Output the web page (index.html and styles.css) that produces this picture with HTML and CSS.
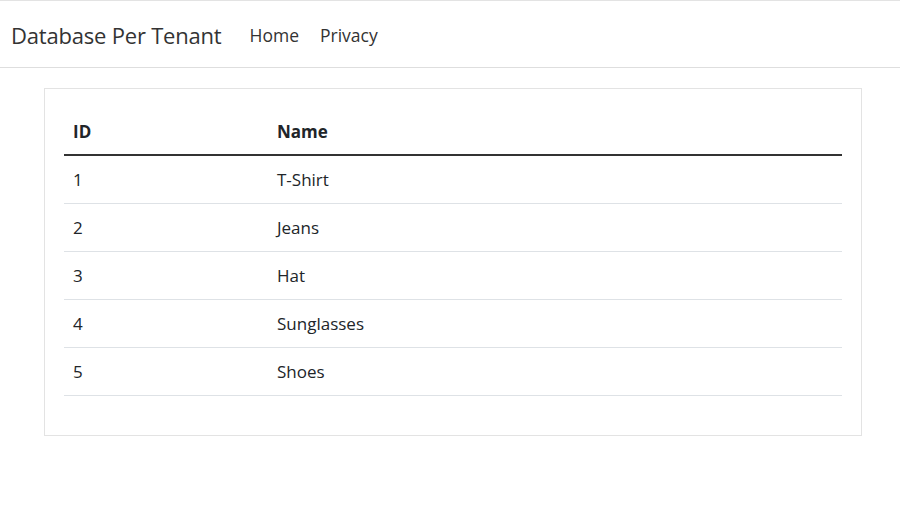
FILE: index.html
```html
<!DOCTYPE html>
<html lang="en">
<head>
<meta charset="utf-8">
<title>Database Per Tenant</title>
<link rel="stylesheet" href="styles.css">
</head>
<body>
<header class="navbar">
  <a class="brand" href="#">Database Per Tenant</a>
  <nav class="nav">
    <a class="nav-link" href="#">Home</a>
    <a class="nav-link" href="#">Privacy</a>
  </nav>
</header>
<main class="container">
  <div class="card">
    <table class="table">
      <thead>
        <tr><th class="col-id">ID</th><th>Name</th></tr>
      </thead>
      <tbody>
        <tr><td>1</td><td>T-Shirt</td></tr>
        <tr><td>2</td><td>Jeans</td></tr>
        <tr><td>3</td><td>Hat</td></tr>
        <tr><td>4</td><td>Sunglasses</td></tr>
        <tr><td>5</td><td>Shoes</td></tr>
      </tbody>
    </table>
  </div>
</main>
</body>
</html>
```

FILE: styles.css
```css
* { box-sizing: border-box; }
html, body { margin: 0; padding: 0; background: #fff; }
body {
  font-family: "Open Sans", "Noto Sans", sans-serif;
  color: #212529;
  font-size: 17px;
}
.navbar {
  display: flex;
  align-items: center;
  height: 68px;
  border-top: 1px solid #e3e3e3;
  border-bottom: 1px solid #dedede;
  padding: 2px 11px 0 11px;
}
.brand {
  font-size: 22px;
  color: #333;
  text-decoration: none;
  margin-right: 20px;
  letter-spacing: -0.2px;
}
.nav { display: flex; gap: 5px; }
.nav-link {
  font-size: 17.5px;
  color: #333;
  text-decoration: none;
  padding: 0 8px;
}
.container {
  padding: 20px 38px 0 44px;
}
.card {
  border: 1px solid #e3e3e3;
  padding: 19px 19px 39px 19px;
}
.table {
  width: 100%;
  border-collapse: collapse;
}
.table th, .table td {
  text-align: left;
  padding: 1px 9px 0 9px;
  height: 48px;
  font-size: 17px;
  border-bottom: 1px solid #dee2e6;
}
.table th {
  font-weight: 700;
  height: 47px;
  padding-top: 0;
  border-bottom: 2px solid #333;
}
.col-id { width: 204px; }
```
